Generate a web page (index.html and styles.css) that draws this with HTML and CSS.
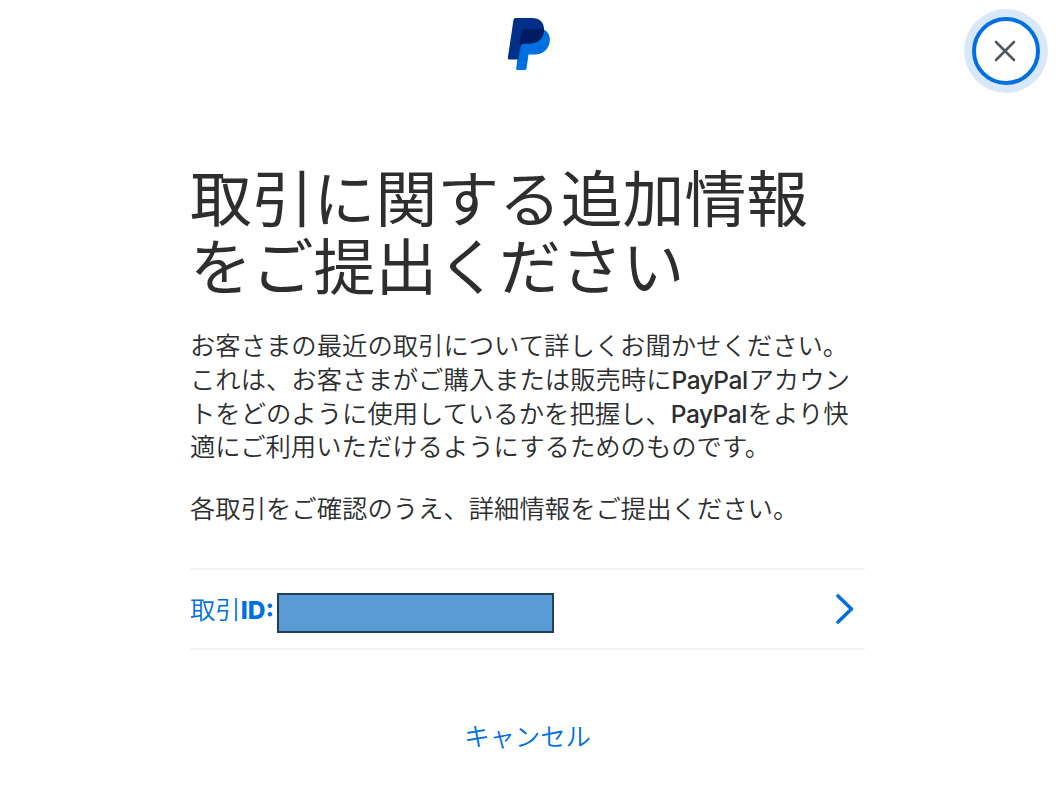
FILE: index.html
```html
<!DOCTYPE html>
<html lang="ja">
<head>
  <meta charset="UTF-8">
  <meta name="viewport" content="width=device-width, initial-scale=1.0">
  <title>PayPal</title>
  <link rel="stylesheet" href="styles.css">
</head>
<body>

  <!-- Header -->
  <header class="header">
    <svg class="logo" width="44" height="54" viewBox="0 0 44 54" role="img" aria-label="PayPal">
      <path fill="#0070e0" d="M14 12H36C42 15 43.800 20 42.500 26C41 33 35 37.500 28 37.500H21.500L19.500 51.500Q19.300 53 17.800 53H10.500Q9 53 9.200 51.500Z"/>
      <path fill="#003087" d="M8.500 1H25C33 1 37.500 6 37 13C36 22 30 26 22 26H14.500L11.200 42.500H2Q.600 42.500 .800 41L6.500 2.700Q6.800 1 8.500 1Z"/>
      <path fill="#001c64" d="M16.300 12H37C37.600 21 31 26.800 22 26.800H17.500Q13 27 12 31.500L14.700 13.500Q15 12 16.300 12Z"/>
    </svg>
    <button class="close-btn" aria-label="閉じる">
      <svg width="22" height="22" viewBox="0 0 22 22">
        <path d="M2 2L20 20M20 2L2 20"/>
      </svg>
    </button>
  </header>

  <!-- Main Content -->
  <main class="main-content">
    <h1>取引に関する追加情報<br>をご提出ください</h1>
    <p class="description">お客さまの最近の取引について詳しくお聞かせください。<br>これは、お客さまがご購入または販売時に<span class="latin">PayPal</span>アカウン<br>トをどのように使用しているかを把握し、<span class="latin">PayPal</span>をより快<br>適にご利用いただけるようにするためのものです。</p>
    <p class="description">各取引をご確認のうえ、詳細情報をご提出ください。</p>

    <a href="#" class="transaction">
      <span class="transaction-label">取引<b>ID:</b></span>
      <span class="transaction-id"></span>
      <svg class="chevron" width="20" height="32" viewBox="0 0 20 32">
        <path d="M3 3L16.500 16L3 29"/>
      </svg>
    </a>

    <a href="#" class="cancel-link">キャンセル</a>
  </main>

</body>
</html>
```
FILE: styles.css
```css
/* Global Styles */
* {
  box-sizing: border-box;
}

body {
  font-family: 'Noto Sans CJK JP', sans-serif;
  font-weight: 350;
  background-color: #fff;
  color: #2c2e2f;
  margin: 0;
}

/* Header */
.header {
  display: grid;
  grid-template-columns: 1fr auto 1fr;
  align-items: start;
  height: 162px;
  padding: 9px 8px 0;
}

.logo {
  grid-column: 2;
  margin: 8px 1px 0 2px;
}

.close-btn {
  display: flex;
  align-items: center;
  justify-content: center;
  justify-self: end;
  width: 68px;
  height: 68px;
  margin: 8px;
  padding: 0 2px 1px 0;
  background: #fff;
  border: 4px solid #0070e0;
  border-radius: 50%;
  box-shadow: 0 0 0 8px #d9e8f9; /* Focus ring */
  cursor: pointer;
}

.close-btn path {
  fill: none;
  stroke: #515860;
  stroke-width: 2.6;
  stroke-linecap: round;
}

/* Main Content */
.main-content {
  width: 675px;
  margin-left: 190px;
}

h1 {
  margin: 0 0 31px;
  font-size: 61.8px;
  font-weight: 400;
  line-height: 67.5px;
  white-space: nowrap;
}

.description {
  margin: 0 0 28px;
  font-size: 25.35px;
  line-height: 33.8px;
  white-space: nowrap;
}

.latin {
  display: inline-block;
  width: 77px;
  font-family: Inter, sans-serif;
  font-size: 24.5px;
  font-weight: 500;
  letter-spacing: -0.5px;
  line-height: 1;
}

/* Transaction row */
.transaction {
  display: flex;
  align-items: center;
  height: 82px;
  margin-top: 43px;
  border-top: 2px solid #f5f3f1;
  border-bottom: 2px solid #f5f3f1;
  color: #0070e0;
  text-decoration: none;
}

.transaction-label {
  width: 87px;
  font-size: 25.35px;
  line-height: 34px;
  white-space: nowrap;
}

.transaction-label b {
  font-family: Inter, sans-serif;
  font-size: 24.5px;
  font-weight: 800;
}

.transaction-id {
  width: 277px;
  height: 40px;
  margin-top: 8px;
  background-color: #5b9bd5;
  border: 2px solid #243f58;
}

.chevron {
  margin: 0 10px 0 auto;
}

.chevron path {
  fill: none;
  stroke: #0070e0;
  stroke-width: 3.6;
  stroke-linecap: round;
  stroke-linejoin: round;
}

.cancel-link {
  display: block;
  width: max-content;
  margin: 68px auto 0;
  color: #0070e0;
  font-size: 25.35px;
  line-height: 34px;
  text-decoration: none;
}
```
